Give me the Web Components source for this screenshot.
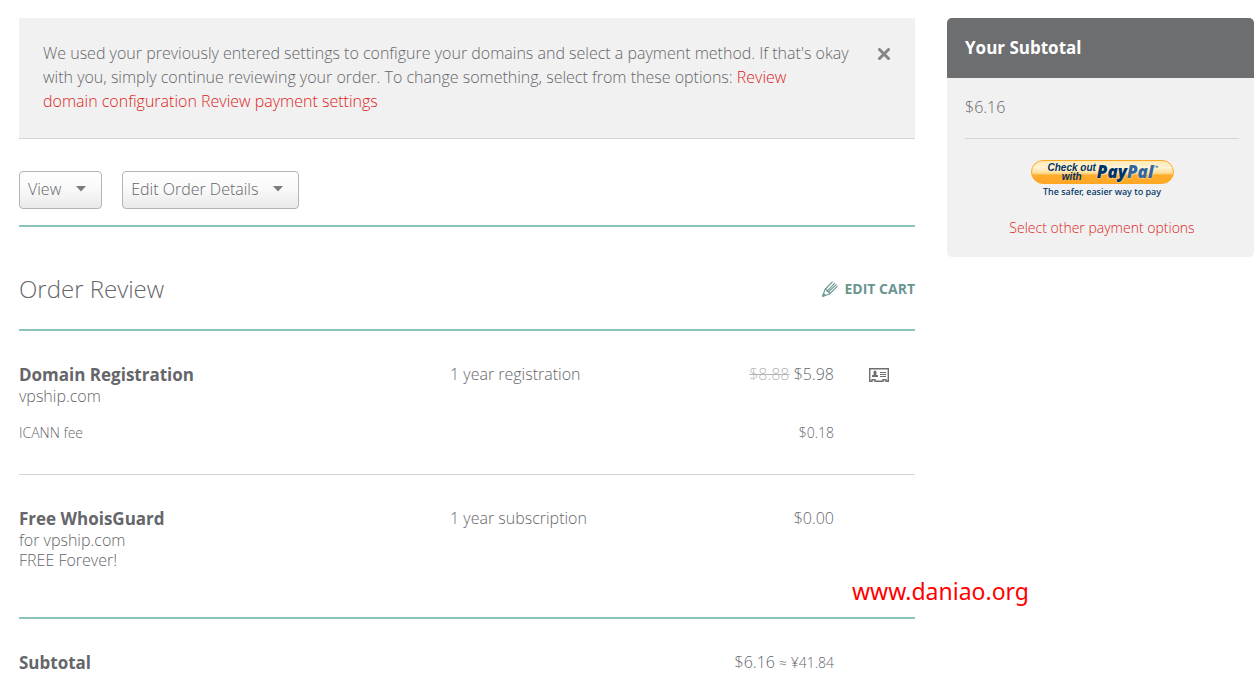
<!DOCTYPE html>
<html lang="en">
<head>
<meta charset="utf-8">
<meta name="viewport" content="width=device-width, initial-scale=1">
<title>Order Review</title>
<style>
    body {
        margin: 0;
        background: #fff;
        color: #65666a;
        font: 300 16px/24px "Open Sans", "Noto Sans", sans-serif;
        --teal: #8ac3bf;
        --line: #d4d4d4;
        --panel: #f1f1f1;
        --link: #dd251c;
        --dark: #6d6e70;
    }
</style>
</head>
<body>
<checkout-page>
    <notice-box>
        We used your previously entered settings to configure your domains and select a payment method. If that's okay with you, simply continue reviewing your order. To change something, select from these options:
        <text-link href="#domains">Review<br>domain configuration</text-link>
        <text-link href="#payment">Review payment settings</text-link>
    </notice-box>
    <tool-bar>
        <menu-button>View</menu-button>
        <menu-button>Edit Order Details</menu-button>
    </tool-bar>
    <section-header>
        Order Review
        <edit-link slot="action" href="#cart">EDIT CART</edit-link>
    </section-header>
    <order-table></order-table>
    <subtotal-panel slot="side">
        <span slot="title">Your Subtotal</span>
        <span slot="amount">$6.16</span>
        <paypal-button></paypal-button>
        <text-link href="#options">Select other payment options</text-link>
    </subtotal-panel>
</checkout-page>
<site-mark>www.daniao.org</site-mark>

<script>
class BaseElement extends HTMLElement {
    constructor() {
        super();
        this.attachShadow({ mode: "open" });
        this.shadowRoot.innerHTML = this.render();
    }

    connectedCallback() {
        const link = this.shadowRoot.querySelector("a");
        if (link && this.hasAttribute("href")) {
            link.href = this.getAttribute("href");
        }
    }
}

class CheckoutPage extends BaseElement {
    render() {
        return `
            <style>
                :host {
                    display: grid;
                    grid-template-columns: minmax(0, 1fr) 307px;
                    gap: 32px;
                    align-items: start;
                    padding: 18px 0 16px 19px;
                }
            </style>
            <main><slot></slot></main>
            <slot name="side"></slot>
        `;
    }
}

class NoticeBox extends BaseElement {
    render() {
        return `
            <style>
                :host {
                    display: flex;
                    gap: 8px;
                    align-items: flex-start;
                    padding: 23px 24px 25px;
                    background: var(--panel);
                    border-bottom: 1px solid var(--line);
                }
                p {
                    flex: 1;
                    margin: 0;
                }
                button {
                    display: flex;
                    margin: 7px 0 0;
                    padding: 0;
                    border: 0;
                    background: none;
                }
            </style>
            <p><slot></slot></p>
            <button type="button" aria-label="Close">
                <svg width="14" height="12" viewBox="0 0 14 12"><path d="M2.5 1.5l9 9M11.5 1.5l-9 9" stroke="#868686" stroke-width="3" stroke-linecap="round"/></svg>
            </button>
        `;
    }
}

class TextLink extends BaseElement {
    render() {
        return `
            <style>
                :host {
                    display: inline;
                }
                a {
                    color: var(--link);
                    text-decoration: none;
                }
            </style>
            <a href="#"><slot></slot></a>
        `;
    }
}

class ToolBar extends BaseElement {
    render() {
        return `
            <style>
                :host {
                    display: flex;
                    gap: 20px;
                    margin-top: 32px;
                    padding-bottom: 16px;
                    border-bottom: 2px solid var(--teal);
                }
            </style>
            <slot></slot>
        `;
    }
}

class MenuButton extends BaseElement {
    render() {
        return `
            <style>
                :host {
                    display: block;
                }
                button {
                    display: flex;
                    align-items: center;
                    gap: 15px;
                    height: 38px;
                    padding: 0 15px 2px 8px;
                    border: 1px solid #b4b4b4;
                    border-radius: 4px;
                    background: linear-gradient(#fefefe, #fafafa 45%, #e9e9e9);
                    color: inherit;
                    font: inherit;
                }
            </style>
            <button type="button"><slot></slot>
                <svg width="10" height="6" viewBox="0 0 10 6"><path d="M0 0h10L5 5.5z" fill="#7c7c7c"/></svg>
            </button>
        `;
    }
}

class SectionHeader extends BaseElement {
    render() {
        return `
            <style>
                :host {
                    display: flex;
                    justify-content: space-between;
                    align-items: center;
                    padding: 46px 0 24px;
                    border-bottom: 2px solid var(--teal);
                }
                h1 {
                    margin: 0;
                    font-size: 24px;
                    line-height: 32px;
                    font-weight: inherit;
                }
            </style>
            <h1><slot></slot></h1>
            <slot name="action"></slot>
        `;
    }
}

class EditLink extends BaseElement {
    render() {
        return `
            <style>
                :host {
                    display: block;
                }
                a {
                    display: flex;
                    align-items: center;
                    gap: 6px;
                    color: #6b9591;
                    font-size: 14px;
                    font-weight: 700;
                    text-decoration: none;
                }
            </style>
            <a href="#">
                <svg width="16" height="16" viewBox="0 0 16 16" fill="none" stroke="#6b9591" stroke-width="1.1" stroke-linejoin="round" stroke-linecap="round">
                    <path d="M.7 15.3L3 8.500 10.300.8M.7 15.3L7.500 13l7.700-7.700M3 8.500c1.400-.3 2.200.4 2 1.900 1.500-.3 2.700.6 2.500 2.600M5 10.400l7.600-8M6.200 11.200l8-7.600"/>
                    <path d="M.7 15.3l.8-2.700 1.800 1.800z" fill="#6b9591"/>
                </svg>
                <span><slot></slot></span>
            </a>
        `;
    }
}

class OrderTable extends BaseElement {
    render() {
        return `
            <style>
                :host {
                    display: block;
                }
                table {
                    width: 100%;
                    border-collapse: collapse;
                    table-layout: fixed;
                }
                th, td {
                    padding: 0;
                    text-align: left;
                    vertical-align: top;
                    font-weight: inherit;
                }
                .term { width: 260px; }
                .price { width: 124px; text-align: right; white-space: nowrap; }
                .tools { width: 81px; }
                td.tools svg {
                    display: block;
                    margin: 6px 0 0 35px;
                }
                .first > * { padding-top: 31px; }
                .last > * { padding-bottom: 31px; }
                .free > * { padding-bottom: 47px; }
                tbody { border-bottom: 1px solid var(--line); }
                tbody.end { border-bottom: 2px solid var(--teal); }
                tbody.total { border: 0; }
                strong {
                    display: block;
                    padding-top: 2px;
                    font-size: 17px;
                    line-height: 22px;
                    font-weight: 700;
                }
                .sub {
                    display: block;
                    line-height: 20px;
                }
                .fee > * {
                    padding-top: 17px;
                    font-size: 14px;
                    line-height: 20px;
                }
                s { color: #b5b5b5; }
                small { font-size: 14px; }
            </style>
            <table aria-label="Order items">
                <colgroup><col><col class="term"><col class="price"><col class="tools"></colgroup>
                <tbody>
                    <tr class="first">
                        <th scope="row"><strong>Domain Registration</strong><span class="sub">vpship.com</span></th>
                        <td>1 year registration</td>
                        <td class="price"><s>$8.88</s> $5.98</td>
                        <td class="tools">
                            <svg width="20" height="14" viewBox="0 0 20 14" role="img" aria-label="Contact details">
                                <path d="M3 13.300H.7V.7h18.600v12.600H17v-1.600h-3v1.600H6v-1.600H3z" fill="none" stroke="#6d6e70" stroke-width="1.4"/>
                                <path d="M4.500 4a1.500 1.500 0 0 1 3 0v1.500l-.5 1 2 .8V9H3V7.300l2-.8-.5-1z" fill="#6d6e70"/>
                                <path d="M11 4.500h6M11 6.500h6M11 8.500h6" stroke="#6d6e70"/>
                            </svg>
                        </td>
                    </tr>
                    <tr class="fee last">
                        <th scope="row">ICANN fee</th>
                        <td></td>
                        <td class="price">$0.18</td>
                        <td></td>
                    </tr>
                </tbody>
                <tbody class="end">
                    <tr class="first free">
                        <th scope="row"><strong>Free WhoisGuard</strong><span class="sub">for vpship.com</span><span class="sub">FREE Forever!</span></th>
                        <td>1 year subscription</td>
                        <td class="price">$0.00</td>
                        <td></td>
                    </tr>
                </tbody>
                <tbody class="total">
                    <tr class="first">
                        <th scope="row"><strong>Subtotal</strong></th>
                        <td></td>
                        <td class="price">$6.16 <small>≈ ¥41.84</small></td>
                        <td></td>
                    </tr>
                </tbody>
            </table>
        `;
    }
}

class SubtotalPanel extends BaseElement {
    render() {
        return `
            <style>
                :host {
                    display: block;
                    overflow: hidden;
                    border-radius: 5px;
                    background: var(--panel);
                }
                h2 {
                    margin: 0;
                    padding: 18px;
                    background: var(--dark);
                    color: #fff;
                    font-size: 17px;
                    line-height: 24px;
                    font-weight: 700;
                }
                .amount {
                    margin: 0 15px 0 18px;
                    padding: 17px 0 19px;
                    border-bottom: 1px solid var(--line);
                }
                .pay {
                    display: flex;
                    flex-direction: column;
                    align-items: center;
                    gap: 16px;
                    padding: 21px 15px 17px 18px;
                    font-size: 14px;
                }
            </style>
            <h2><slot name="title"></slot></h2>
            <div class="amount"><slot name="amount"></slot></div>
            <div class="pay"><slot></slot></div>
        `;
    }
}

class PaypalButton extends BaseElement {
    render() {
        return `
            <style>
                :host {
                    display: block;
                }
                button {
                    display: block;
                    padding: 0;
                    border: 0;
                    background: none;
                    color: #003366;
                    font: 500 9px/16px "Noto Sans", sans-serif;
                }
                .pill {
                    box-sizing: border-box;
                    display: flex;
                    justify-content: center;
                    align-items: center;
                    gap: 1px;
                    width: 143px;
                    height: 24px;
                    padding-left: 2px;
                    border: 1px solid #ffa822;
                    border-radius: 12px;
                    background: linear-gradient(#ffeab8, #fff3d2 30%, #ffdc95 55%, #ffab2a 65%, #ffa726);
                    font: italic 700 10px/9px "Liberation Sans", sans-serif;
                }
                .brand {
                    display: flex;
                    font: italic 800 17px/20px "Open Sans", sans-serif;
                    text-shadow: 0 0 2px #fff;
                }
                i { color: #336699; }
                sup {
                    font: 5px/10px "Liberation Sans", sans-serif;
                }
            </style>
            <button type="button">
                <span class="pill"><span>Check out<br>with</span><span class="brand">Pay<i>Pal</i><sup>™</sup></span></span>
                The safer, easier way to pay
            </button>
        `;
    }
}

class SiteMark extends BaseElement {
    render() {
        return `
            <style>
                :host {
                    position: absolute;
                    top: 575px;
                    left: 852px;
                    color: #f00;
                    font: 400 23px/32px "Noto Sans", sans-serif;
                }
            </style>
            <slot></slot>
        `;
    }
}

customElements.define("checkout-page", CheckoutPage);
customElements.define("notice-box", NoticeBox);
customElements.define("text-link", TextLink);
customElements.define("tool-bar", ToolBar);
customElements.define("menu-button", MenuButton);
customElements.define("section-header", SectionHeader);
customElements.define("edit-link", EditLink);
customElements.define("order-table", OrderTable);
customElements.define("subtotal-panel", SubtotalPanel);
customElements.define("paypal-button", PaypalButton);
customElements.define("site-mark", SiteMark);
</script>
</body>
</html>
